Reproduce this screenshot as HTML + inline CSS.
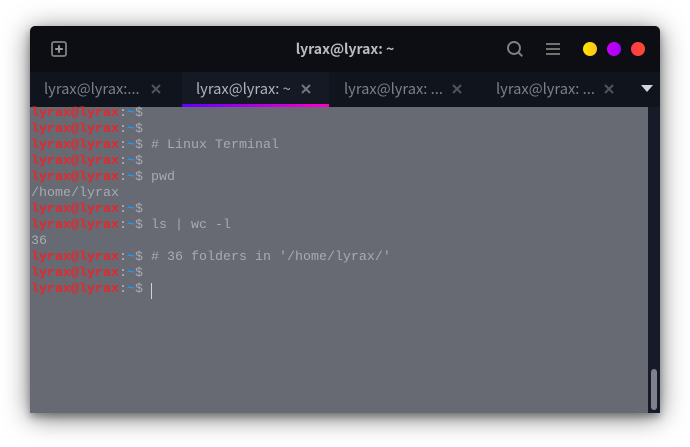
<!DOCTYPE html>
<html><head><meta charset="utf-8">
<style>
html,body{margin:0;padding:0;width:690px;height:447px;overflow:hidden;background:#fff}
*{box-sizing:border-box}
#win{position:absolute;left:30px;top:26px;width:630px;height:387px;border-radius:5px 5px 0 0;background:#0c0e13;box-shadow:0 4px 8px rgba(0,0,0,.3),0 4px 26px rgba(0,0,0,.55);overflow:hidden}
#shadow{position:absolute;left:30px;top:26px;width:630px;height:387px;border-radius:5px 5px 0 0;box-shadow:0 4px 8px rgba(0,0,0,.3),0 4px 26px rgba(0,0,0,.55)}
#tabs{position:absolute;left:0;top:46px;width:630px;height:35px;background:#10141c}
.t{position:absolute;top:0;height:35px;font:14.7px/33px "Noto Sans CJK SC","Liberation Sans",sans-serif;color:#7b8089;white-space:nowrap}
#active{position:absolute;left:152px;top:46px;width:147px;height:35px;background:#151923}
#bar{position:absolute;left:152px;top:78px;width:147px;height:3px;background:linear-gradient(90deg,#5f00ff,#ff00c8)}
#title{position:absolute;left:0;top:0;width:630px;text-align:center;font:bold 14px/46px "Noto Sans CJK SC","Liberation Sans",sans-serif;color:#b9bdc6}
#term{position:absolute;left:0;top:81px;width:618px;height:306px;background:#676a73;font:13.33px/16px "Liberation Mono",monospace;color:#a8aab0;white-space:pre}
#sb{position:absolute;left:618px;top:81px;width:12px;height:306px;background:#171b29}
#th{position:absolute;left:3px;top:262px;width:6px;height:41px;border-radius:3px;background:#7f818e}
.l{position:absolute;left:1px;height:16px;white-space:pre}
b{color:#e02a2e;-webkit-text-stroke:.1px #e02a2e}
u{text-decoration:none;font-weight:bold;color:#a8aab0}
i{font-style:normal;font-weight:bold;color:#1f9bea}
.dot{position:absolute;top:16px;width:14px;height:14px;border-radius:50%}
svg{position:absolute;overflow:visible}
</style></head><body>
<div id="win">
<svg style="left:21px;top:15px" width="16" height="16" viewBox="0 0 16 16"><rect x="1" y="1" width="14" height="14" rx="2" fill="none" stroke="#808080" stroke-width="1.8"/><path d="M8 4.2V11.8M4.2 8H11.8" stroke="#9a9a9a" stroke-width="1.9"/></svg>
<div id="title">lyrax@lyrax: ~</div>
<svg style="left:476px;top:14px" width="18" height="18" viewBox="0 0 18 18"><circle cx="8" cy="8" r="6" fill="none" stroke="#808080" stroke-width="1.9"/><path d="M12.4 12.4L16.3 16.3" stroke="#808080" stroke-width="2"/></svg>
<svg style="left:516px;top:17px" width="14" height="12" viewBox="0 0 14 12"><path d="M0 1H14M0 6H14M0 11H14" stroke="#808080" stroke-width="1.8"/></svg>
<div class="dot" style="left:553px;background:linear-gradient(90deg,#ffe600,#ffc21a)"></div>
<div class="dot" style="left:577px;background:linear-gradient(90deg,#c800f0,#a000ff)"></div>
<div class="dot" style="left:601px;background:linear-gradient(90deg,#ff3a4a,#ff4a30)"></div>
<div id="tabs"></div>
<div id="active"></div><div id="bar"></div>
<div class="t" style="left:14px;top:46px">lyrax@lyrax:...</div>
<svg style="left:121px;top:58px" width="10" height="10" viewBox="0 0 10 10"><path d="M1 1L9 9M9 1L1 9" stroke="#4f535d" stroke-width="2"/></svg>
<div class="t" style="left:166px;top:46px;color:#b0b4bc">lyrax@lyrax: ~</div>
<svg style="left:271px;top:58px" width="10" height="10" viewBox="0 0 10 10"><path d="M1 1L9 9M9 1L1 9" stroke="#71757e" stroke-width="2"/></svg>
<div class="t" style="left:314px;top:46px">lyrax@lyrax: ...</div>
<svg style="left:422px;top:58px" width="10" height="10" viewBox="0 0 10 10"><path d="M1 1L9 9M9 1L1 9" stroke="#4f535d" stroke-width="2"/></svg>
<div class="t" style="left:466px;top:46px">lyrax@lyrax: ...</div>
<svg style="left:574px;top:58px" width="10" height="10" viewBox="0 0 10 10"><path d="M1 1L9 9M9 1L1 9" stroke="#4f535d" stroke-width="2"/></svg>
<svg style="left:611px;top:59px" width="12" height="7" viewBox="0 0 12 7"><path d="M0 0H12L6 7Z" fill="#d4d6da"/></svg>
<div id="term">
<div class="l" style="top:-1px"><b>lyrax@lyrax</b><u>:</u><i>~</i>$</div>
<div class="l" style="top:15px"><b>lyrax@lyrax</b><u>:</u><i>~</i>$</div>
<div class="l" style="top:31px"><b>lyrax@lyrax</b><u>:</u><i>~</i>$ # Linux Terminal</div>
<div class="l" style="top:47px"><b>lyrax@lyrax</b><u>:</u><i>~</i>$</div>
<div class="l" style="top:63px"><b>lyrax@lyrax</b><u>:</u><i>~</i>$ pwd</div>
<div class="l" style="top:79px">/home/lyrax</div>
<div class="l" style="top:95px"><b>lyrax@lyrax</b><u>:</u><i>~</i>$</div>
<div class="l" style="top:111px"><b>lyrax@lyrax</b><u>:</u><i>~</i>$ ls | wc -l</div>
<div class="l" style="top:127px">36</div>
<div class="l" style="top:143px"><b>lyrax@lyrax</b><u>:</u><i>~</i>$ # 36 folders in '/home/lyrax/'</div>
<div class="l" style="top:159px"><b>lyrax@lyrax</b><u>:</u><i>~</i>$</div>
<div class="l" style="top:175px"><b>lyrax@lyrax</b><u>:</u><i>~</i>$</div>
<div style="position:absolute;left:121px;top:176px;width:1px;height:16px;background:#d0d2d6"></div>
</div>
<div id="sb"><div id="th"></div></div>
</div>
</body></html>
